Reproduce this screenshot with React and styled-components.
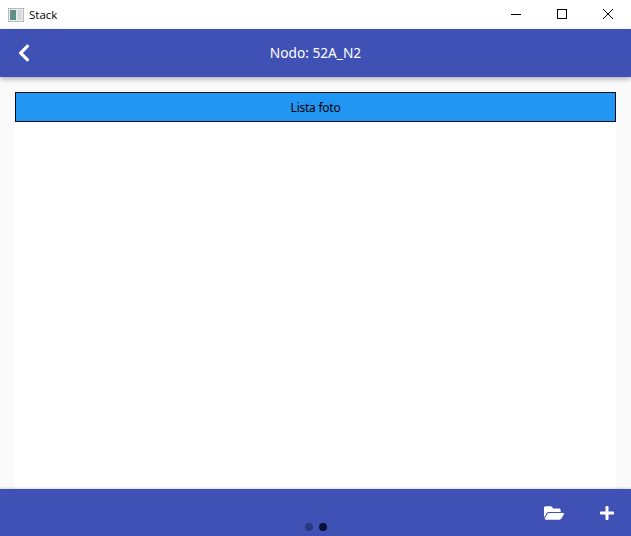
import styled, { createGlobalStyle } from "styled-components";
import { FaChevronLeft, FaFolderOpen, FaPlus } from "react-icons/fa";

const GlobalStyle = createGlobalStyle`
  html, body {
    margin: 0;
    padding: 0;
    background: #fff;
  }
`;

const Window = styled.div`
  width: 631px;
  height: 536px;
  display: flex;
  flex-direction: column;
  overflow: hidden;
  font-family: "Noto Sans", sans-serif;
`;

const TitleBar = styled.div`
  height: 29px;
  flex: none;
  display: flex;
  align-items: center;
  background: #fff;
`;

const AppIcon = styled.svg`
  width: 16px;
  height: 16px;
  margin-left: 8px;
  flex: none;
`;

const WindowTitle = styled.span`
  margin-left: 5px;
  font-size: 11.5px;
  color: #000;
  font-family: "Open Sans", sans-serif;
`;

const WindowControls = styled.div`
  margin-left: auto;
  display: flex;
`;

const WindowButton = styled.div`
  width: 46px;
  height: 29px;
  display: flex;
  align-items: center;
  justify-content: center;
  svg {
    width: 11px;
    height: 11px;
    stroke: #000;
    stroke-width: 1;
    fill: none;
  }
`;

const Header = styled.header`
  height: 48px;
  flex: none;
  display: grid;
  grid-template-columns: 48px 1fr 48px;
  align-items: center;
  background: #3f51b5;
  color: #fff;
  box-shadow: 0 2px 5px rgba(0, 0, 0, 0.3);
  position: relative;
  z-index: 1;
`;

const BackButton = styled.div`
  display: flex;
  justify-content: center;
  font-size: 20px;
  padding-right: 1px;
  svg {
    display: block;
  }
`;

const HeaderTitle = styled.div`
  text-align: center;
  font-size: 13.7px;
  line-height: 48px;
`;

const Page = styled.main`
  flex: 1;
  background: #fafafa;
  padding: 15px 15px 0;
  display: flex;
  flex-direction: column;
`;

const ListButton = styled.div`
  height: 30px;
  box-sizing: border-box;
  flex: none;
  border: 1px solid #0a0a1e;
  background: #2196f3;
  color: #000;
  font-size: 12px;
  letter-spacing: -0.25px;
  display: flex;
  align-items: center;
  justify-content: center;
`;

const Panel = styled.div`
  flex: 1;
  background: #fff;
`;

const Footer = styled.footer`
  height: 47px;
  flex: none;
  position: relative;
  display: flex;
  justify-content: flex-end;
  align-items: center;
  gap: 35px;
  padding: 0 16px 0 0;
  background: #3f51b5;
  color: #fff;
  box-shadow: 0 -1px 2px rgba(0, 0, 0, 0.15);
`;

const FooterIcon = styled.div`
  display: flex;
  font-size: ${(props) => props.size}px;
  svg {
    display: block;
  }
`;

const PageDots = styled.div`
  position: absolute;
  left: 305px;
  bottom: 5px;
  display: flex;
  gap: 6px;
`;

const Dot = styled.span`
  width: 8px;
  height: 8px;
  border-radius: 50%;
  background: ${(props) => (props.active ? "#0c1033" : "#2b3a80")};
`;

export default function App() {
  return (
    <Window>
      <GlobalStyle />
      <TitleBar>
        <AppIcon viewBox="0 0 16 16">
          <rect x="0.5" y="1.5" width="15" height="13" fill="#eef0f0" stroke="#b4b9b9" />
          <rect x="2" y="3" width="6" height="10" fill="#5f9088" />
          <rect x="9" y="3" width="5" height="10" fill="#d5dcdc" />
        </AppIcon>
        <WindowTitle>Stack</WindowTitle>
        <WindowControls>
          <WindowButton>
            <svg viewBox="0 0 11 11">
              <path d="M0 5.5H10" />
            </svg>
          </WindowButton>
          <WindowButton>
            <svg viewBox="0 0 11 11">
              <rect x="0.5" y="0.5" width="9" height="9" />
            </svg>
          </WindowButton>
          <WindowButton>
            <svg viewBox="0 0 11 11">
              <path d="M0 0L10 10M10 0L0 10" />
            </svg>
          </WindowButton>
        </WindowControls>
      </TitleBar>
      <Header>
        <BackButton>
          <FaChevronLeft />
        </BackButton>
        <HeaderTitle>Nodo: 52A_N2</HeaderTitle>
      </Header>
      <Page>
        <ListButton>Lista foto</ListButton>
        <Panel />
      </Page>
      <Footer>
        <FooterIcon size={20}>
          <FaFolderOpen />
        </FooterIcon>
        <FooterIcon size={16}>
          <FaPlus />
        </FooterIcon>
        <PageDots>
          <Dot />
          <Dot active />
        </PageDots>
      </Footer>
    </Window>
  );
}
